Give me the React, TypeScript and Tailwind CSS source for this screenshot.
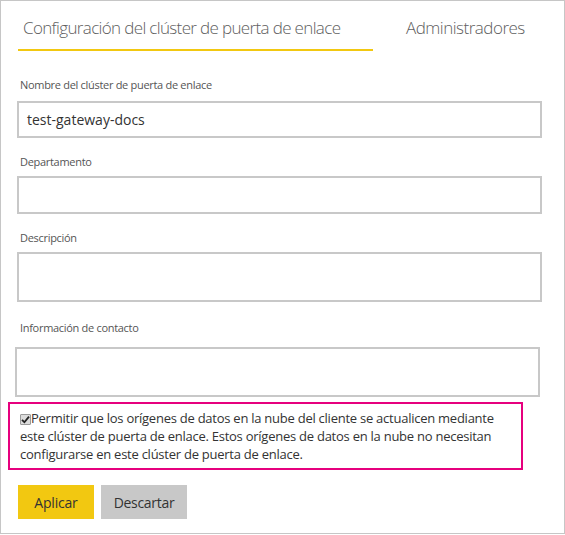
const font = "font-['Open_Sans',sans-serif]";

function Label({ children, className = "" }: { children: React.ReactNode; className?: string }) {
  return (
    <div className={`pl-[19px] text-[11px] tracking-[-0.3px] leading-[16px] text-[#555] ${className}`}>
      {children}
    </div>
  );
}

function Field({ value, className = "" }: { value?: string; className?: string }) {
  return (
    <div
      className={`border-2 border-[#c8c8c8] bg-white px-[8px] flex items-center text-[14px] text-[#333] ${className}`}
    >
      {value}
    </div>
  );
}

export default function App() {
  return (
    <div className={`w-[565px] h-[534px] border border-[#c6c6c6] bg-white ${font}`}>
      {/* Tabs */}
      <div className="flex items-end pt-[13px] pl-[17px]">
        <div className="w-[355px] border-b-2 border-[#f2c811] pl-[5px] pb-[7px] text-[17px] tracking-[-0.65px] leading-[28px] font-light text-[#606060] whitespace-nowrap">
          Configuración del clúster de puerta de enlace
        </div>
        <div className="ml-[33px] pb-[9px] text-[17px] tracking-[-0.5px] leading-[28px] font-light text-[#606060]">
          Administradores
        </div>
      </div>

      <Label className="mt-[26px]">Nombre del clúster de puerta de enlace</Label>
      <Field value="test-gateway-docs" className="ml-[16px] mt-[8px] w-[525px] h-[37px]" />

      <Label className="mt-[16px]">Departamento</Label>
      <Field className="ml-[16px] mt-[6px] w-[525px] h-[38px]" />

      <Label className="mt-[16px]">Descripción</Label>
      <Field className="ml-[16px] mt-[6px] w-[525px] h-[50px]" />

      <Label className="mt-[18px]">Información de contacto</Label>
      <Field className="ml-[14px] mt-[11px] w-[525px] h-[50px]" />

      {/* Highlighted option */}
      <div className="ml-[7px] mt-[5px] w-[515px] h-[68px] border-2 border-[#e6007e] pl-[10px] pt-[5px] text-[13px] tracking-[-0.25px] leading-[18px] text-[#333]">
        <span className="inline-flex items-center justify-center align-[-1px] w-[11px] h-[11px] bg-[#dcdcdc] border border-[#9a9a9a] rounded-[1px]">
          <svg width="9" height="9" viewBox="0 0 9 9">
            <path d="M1 4.8 L3.4 7.2 L8 1.6" fill="none" stroke="#222" strokeWidth="1.8" />
          </svg>
        </span>
        Permitir que los orígenes de datos en la nube del cliente se actualicen mediante
        <br />
        este clúster de puerta de enlace. Estos orígenes de datos en la nube no necesitan
        <br />
        configurarse en este clúster de puerta de enlace.
      </div>

      {/* Actions */}
      <div className="flex gap-[7px] ml-[17px] mt-[15px]">
        <button className="w-[76px] h-[34px] bg-[#f2c811] text-[14px] tracking-[-0.2px] text-[#333]">Aplicar</button>
        <button className="w-[86px] h-[34px] bg-[#c8c8c8] text-[14px] tracking-[-0.3px] text-[#333]">Descartar</button>
      </div>
    </div>
  );
}
